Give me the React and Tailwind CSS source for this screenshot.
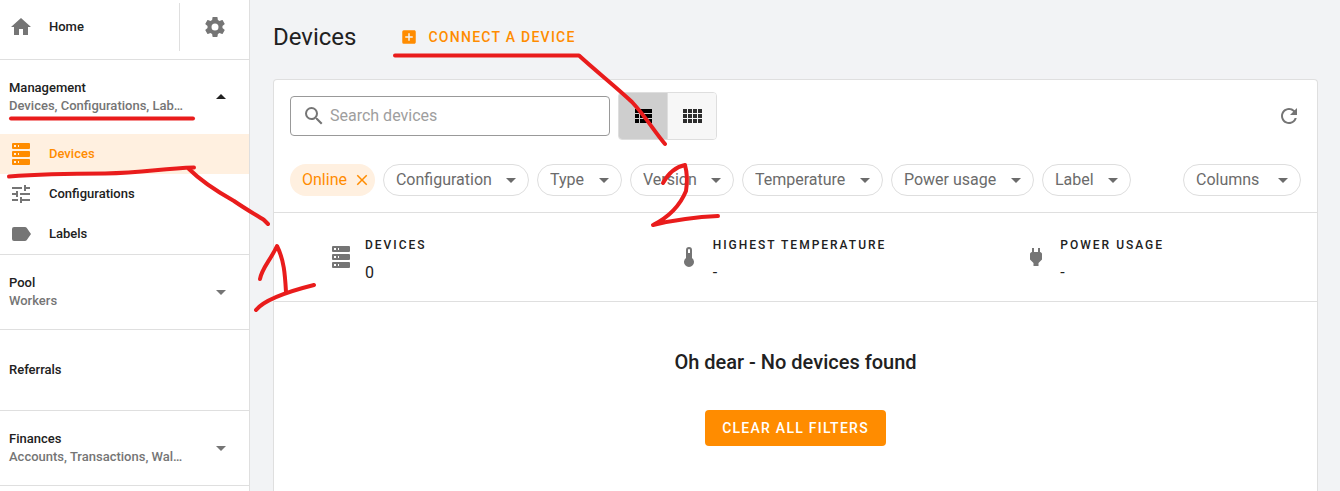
import { MdAddBox, MdArrowDropDown, MdArrowDropUp, MdClose, MdHome, MdRefresh, MdSearch, MdTune } from "react-icons/md";

const paths = {
  cog: "M12,15.5A3.5,3.5 0 0,1 8.5,12A3.5,3.5 0 0,1 12,8.5A3.5,3.5 0 0,1 15.5,12A3.5,3.5 0 0,1 12,15.5M19.43,12.97C19.47,12.65 19.5,12.33 19.5,12C19.5,11.67 19.47,11.34 19.43,11L21.54,9.37C21.73,9.22 21.78,8.95 21.66,8.73L19.66,5.27C19.54,5.05 19.27,4.96 19.05,5.05L16.56,6.05C16.04,5.66 15.5,5.32 14.87,5.07L14.5,2.42C14.46,2.18 14.25,2 14,2H10C9.75,2 9.54,2.18 9.5,2.42L9.13,5.07C8.5,5.32 7.96,5.66 7.44,6.05L4.95,5.05C4.73,4.96 4.46,5.05 4.34,5.27L2.34,8.73C2.21,8.95 2.27,9.22 2.46,9.37L4.57,11C4.53,11.34 4.5,11.67 4.5,12C4.5,12.33 4.53,12.65 4.57,12.97L2.46,14.63C2.27,14.78 2.21,15.05 2.34,15.27L4.34,18.73C4.46,18.95 4.73,19.03 4.95,18.95L7.44,17.94C7.96,18.34 8.5,18.68 9.13,18.93L9.5,21.58C9.54,21.82 9.75,22 10,22H14C14.25,22 14.46,21.82 14.5,21.58L14.87,18.93C15.5,18.67 16.04,18.34 16.56,17.94L19.05,18.95C19.27,19.03 19.54,18.95 19.66,18.73L21.66,15.27C21.78,15.05 21.73,14.78 21.54,14.63L19.43,12.97Z",
  server: "M4,1H20A1,1 0 0,1 21,2V6A1,1 0 0,1 20,7H4A1,1 0 0,1 3,6V2A1,1 0 0,1 4,1M4,9H20A1,1 0 0,1 21,10V14A1,1 0 0,1 20,15H4A1,1 0 0,1 3,14V10A1,1 0 0,1 4,9M4,17H20A1,1 0 0,1 21,18V22A1,1 0 0,1 20,23H4A1,1 0 0,1 3,22V18A1,1 0 0,1 4,17M9,5H10V3H9V5M9,13H10V11H9V13M9,21H10V19H9V21M5,3V5H7V3H5M5,11V13H7V11H5M5,19V21H7V19H5Z",
  label: "M17.63,5.84C17.27,5.33 16.67,5 16,5H5A2,2 0 0,0 3,7V17A2,2 0 0,0 5,19H16C16.67,19 17.27,18.66 17.63,18.15L22,12L17.63,5.84Z",
  thermometer: "M15 13V5A3 3 0 0 0 9 5V13A5 5 0 1 0 15 13M12 4A1 1 0 0 1 13 5V8H11V5A1 1 0 0 1 12 4Z",
  plug: "M16,7V3H14V7H10V3H8V7H8C7,7 6,8 6,9V14.5L9.5,18V21H14.5V18L18,14.5V9C18,8 17,7 16,7Z",
  list: "M9,5V9H21V5H9M9,19H21V15H9V19M9,14H21V10H9V14M4,9H8V5H4V9M4,19H8V15H4V19M4,14H8V10H4V14Z",
  grid: "M3,5H7V9H3ZM8,5H12V9H8ZM13,5H17V9H13ZM18,5H22V9H18ZM3,10H7V14H3ZM8,10H12V14H8ZM13,10H17V14H13ZM18,10H22V14H18ZM3,15H7V19H3ZM8,15H12V19H8ZM13,15H17V19H13ZM18,15H22V19H18Z",
};

function Icon({ name, className = "" }) {
  return (
    <svg viewBox="0 0 24 24" aria-hidden="true" className={`size-6 shrink-0 ${className}`}>
      <path d={paths[name]} fill="currentColor" fillRule="evenodd" />
    </svg>
  );
}

function NavGroup({ title, detail, open = false }) {
  return (
    <button type="button" aria-expanded={open} className="flex h-[74px] w-full items-center pl-[9px] pr-4 text-left">
      <span className="text-[13px] leading-[18px] font-medium whitespace-nowrap">
        <span className="block">{title}</span>
        <span className="block text-[#757575]">{detail}</span>
      </span>
      {open ? (
        <MdArrowDropUp className="ml-auto size-6" />
      ) : (
        <MdArrowDropDown className="ml-auto size-6 text-[#757575]" />
      )}
    </button>
  );
}

function NavItem({ icon, label, active = false }) {
  return (
    <a
      href="#"
      aria-current={active ? "page" : undefined}
      className={`flex h-10 items-center gap-4 pl-[9px] text-[13px] font-medium ${active ? "bg-[#fff0e0] text-[#ff8c00]" : ""}`}
    >
      <span className={active ? "" : "text-[#757575]"}>{icon}</span>
      {label}
    </a>
  );
}

function Sidebar() {
  return (
    <nav className="w-[250px] shrink-0 border-r border-[#dfdfdf] bg-white *:border-b *:border-[#dfdfdf]">
      <div className="flex h-[60px] pt-[3px] pb-2">
        <a href="#" className="flex flex-1 items-center gap-4 border-r border-[#dfdfdf] pl-[9px] text-[13px] font-medium">
          <MdHome className="size-6 text-[#757575]" />
          Home
        </a>
        <button type="button" aria-label="Settings" className="flex w-[69px] items-center justify-center text-[#757575]">
          <Icon name="cog" />
        </button>
      </div>
      <div>
        <NavGroup title="Management" detail="Devices, Configurations, Lab…" open />
        <NavItem icon={<Icon name="server" />} label="Devices" active />
        <NavItem icon={<MdTune className="size-6" />} label="Configurations" />
        <NavItem icon={<Icon name="label" />} label="Labels" />
      </div>
      <div>
        <NavGroup title="Pool" detail="Workers" />
      </div>
      <div>
        <a href="#" className="flex h-20 items-center pl-[9px] text-[13px] font-medium">
          Referrals
        </a>
      </div>
      <div>
        <NavGroup title="Finances" detail="Accounts, Transactions, Wal…" />
      </div>
    </nav>
  );
}

function SelectChip({ label, wide = false }) {
  return (
    <label className="relative flex text-[#6b6b6b]">
      <select
        aria-label={label}
        className={`h-8 appearance-none rounded-full border border-[#dedede] bg-white pl-3 text-base ${wide ? "pr-10" : "pr-9"}`}
      >
        <option>{label}</option>
      </select>
      <MdArrowDropDown className="pointer-events-none absolute right-1.5 top-1 size-6" />
    </label>
  );
}

function Stat({ icon, label, value }) {
  return (
    <div className="flex items-center gap-3 pl-[55px]">
      <Icon name={icon} className="text-[#757575]" />
      <dl className="pt-2">
        <dt className="text-xs leading-6 font-medium tracking-[2px]">{label}</dt>
        <dd className="text-base leading-8">{value}</dd>
      </dl>
    </div>
  );
}

function Annotations() {
  return (
    <svg
      width="1340"
      height="491"
      aria-hidden="true"
      className="pointer-events-none absolute top-0 left-0"
      fill="none"
      stroke="#e91c1c"
      strokeWidth="4"
      strokeLinecap="round"
      strokeLinejoin="round"
    >
      <path d="M11 118.500H193" />
      <path d="M9 176.500C40 174 75 173.500 105 173.500C145 173 160 168.500 194 167.500" />
      <path d="M189 169C200 180 218 192 234 201C247 210 258 216 264 220L268 224" />
      <path d="M260 279C262 268 270 261 277 246C284 260 285 274 286 292" />
      <path d="M256 310C264 300 290 291 314 285" />
      <path d="M395 55.500H579C597 72 615 86 632 102C646 117 654 131 665 144" />
      <path d="M663 183C668 174 675 167 685 165C688 176 687 185 686 191C679 208 665 219 653 225C674 220 693 217 718 216" />
    </svg>
  );
}

const filters = ["Configuration", "Type", "Version", "Temperature", "Power usage", "Label"];

export default function App() {
  return (
    <div className="relative flex min-h-screen bg-[#f2f3f5] font-['Roboto',sans-serif] text-[#212121]">
      <Sidebar />
      <main className="flex min-w-0 flex-1 flex-col pr-[22px] pl-[23px]">
        <header className="flex h-[79px] items-center gap-11 pb-1.5">
          <h1 className="text-2xl">Devices</h1>
          <button type="button" className="flex items-center gap-2.5 text-sm font-medium tracking-[0.09em] text-[#ff8c00]">
            <MdAddBox className="size-[18px]" />
            CONNECT A DEVICE
          </button>
        </header>
        <section className="flex-1 rounded-t border border-b-0 border-[#dfdfdf] bg-white">
          <div className="flex items-center gap-2 px-4 pt-3">
            <label className="flex h-10 w-80 items-center gap-1 rounded border border-[#999] px-[11px]">
              <MdSearch className="size-6 text-[#757575]" />
              <input
                type="search"
                aria-label="Search devices"
                placeholder="Search devices"
                className="min-w-0 flex-1 text-base outline-none placeholder:text-[#9e9e9e]"
              />
            </label>
            <div className="flex h-12 overflow-hidden rounded border border-[#dedede]">
              <button type="button" aria-label="List view" aria-pressed="true" className="flex w-12 items-center justify-center bg-[#cecece] text-black">
                <Icon name="list" />
              </button>
              <button type="button" aria-label="Grid view" aria-pressed="false" className="flex w-[49px] items-center justify-center border-l border-[#dedede] bg-[#f7f7f7] text-[#2d2d2d]">
                <Icon name="grid" />
              </button>
            </div>
            <button type="button" aria-label="Refresh" className="ml-auto text-[#757575]">
              <MdRefresh className="size-6" />
            </button>
          </div>
          <div className="flex flex-wrap items-center gap-2 border-b border-[#dfdfdf] px-4 pt-6 pb-4">
            <button type="button" className="flex h-8 items-center gap-1.5 rounded-full bg-[#fff0e0] pr-1 pl-3 text-base text-[#ff8c00]">
              Online
              <MdClose className="size-[18px]" />
            </button>
            {filters.map((name) => (
              <SelectChip key={name} label={name} />
            ))}
            <div className="ml-auto">
              <SelectChip label="Columns" wide />
            </div>
          </div>
          <div className="grid grid-cols-3 border-b border-[#dfdfdf] py-3">
            <Stat icon="server" label="DEVICES" value="0" />
            <Stat icon="thermometer" label="HIGHEST TEMPERATURE" value="-" />
            <Stat icon="plug" label="POWER USAGE" value="-" />
          </div>
          <div className="flex flex-col items-center gap-8 pt-11">
            <h2 className="text-xl leading-8 font-medium">Oh dear - No devices found</h2>
            <button type="button" className="h-9 rounded bg-[#ff8c00] px-[17px] text-sm font-medium tracking-[0.09em] text-white">
              CLEAR ALL FILTERS
            </button>
          </div>
        </section>
      </main>
      <Annotations />
    </div>
  );
}
